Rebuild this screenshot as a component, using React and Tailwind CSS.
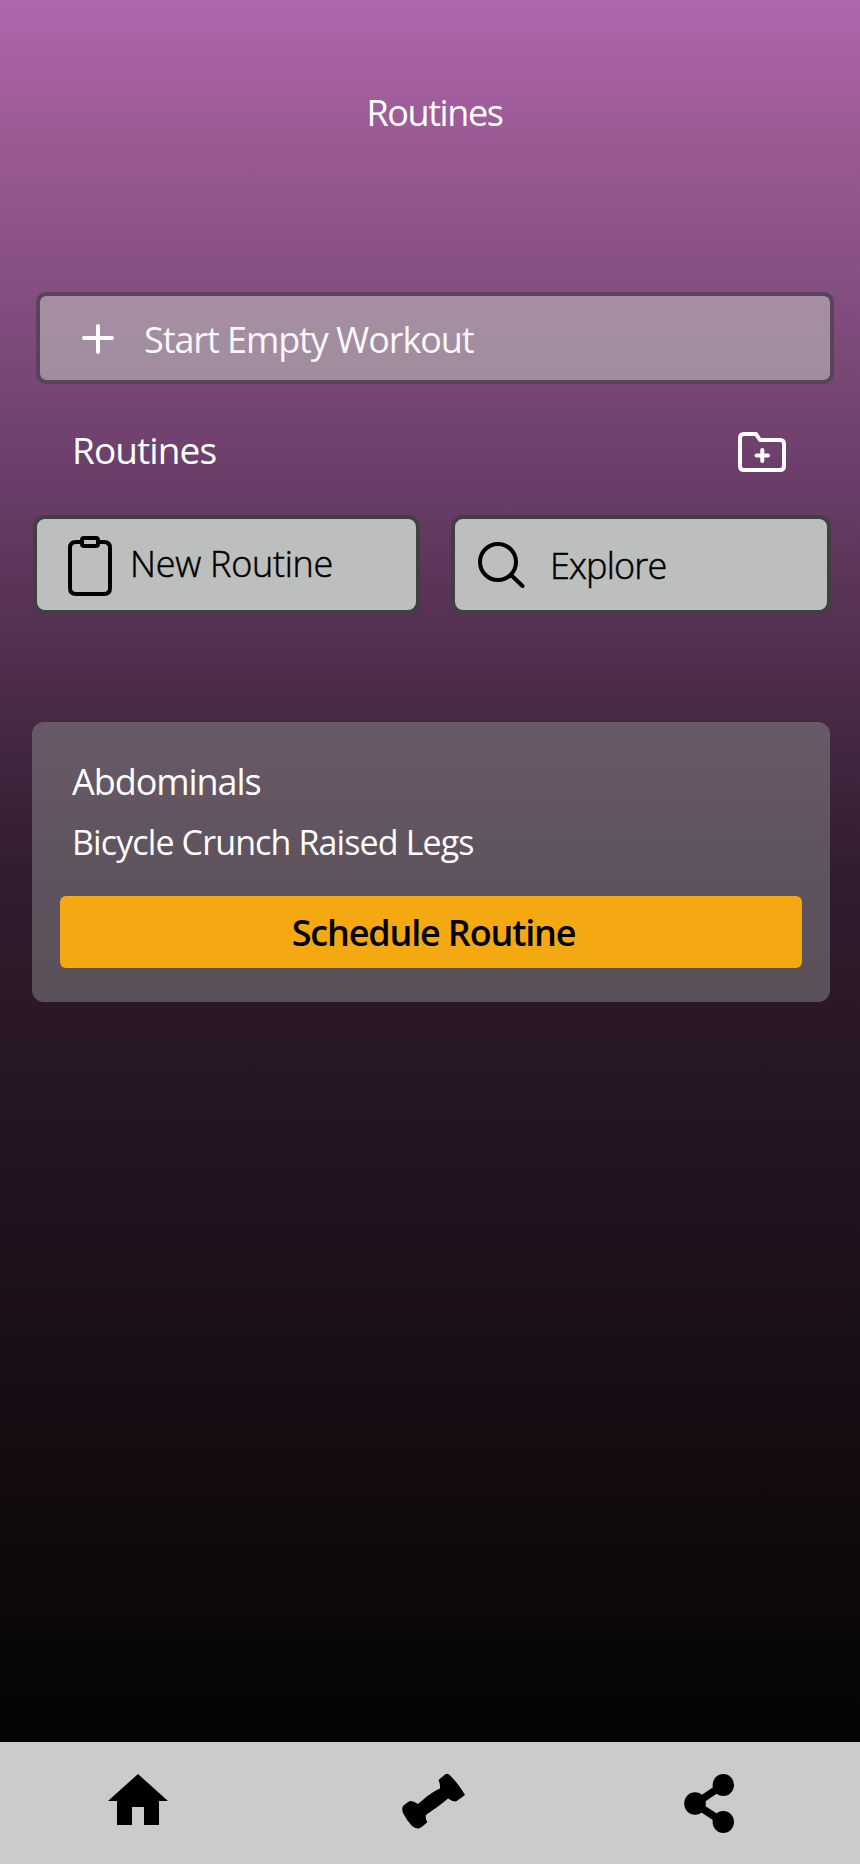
const HomeIcon = () => (
  <svg className="h-[51px] w-[60px]" viewBox="0 0 60 51" fill="black">
    <path d="M30 0 60 27H51V51H36V33H24V51H9V27H0Z" />
  </svg>
)

const DumbbellIcon = () => (
  <svg className="h-[56px] w-[63px]" viewBox="0 0 63 56" fill="black">
    <path d="M36.500 7 43 1.500Q45 0 47 1.500C53 7 59 15 63 22L54 28.500Q50 28.500 46 25.500C40 31 31 37 24 42Q23 46 25.500 49Q20 54 17 55.500Q14 56 10 53Q5 48 1 40Q-.5 36 1 33Q4 30 8 28Q12 28 16 31C23 25 31 18 38 15.500Q38.500 11 36.500 7Z" />
  </svg>
)

const ShareIcon = () => (
  <svg className="h-[60px] w-[50px]" viewBox="0 0 50 60" fill="black">
    <path d="M39 11 11 30 39 48" fill="none" stroke="black" strokeWidth="7.500" />
    <ellipse cx="39.300" cy="11" rx="10.700" ry="11" />
    <ellipse cx="11" cy="29.500" rx="10.800" ry="11.300" />
    <ellipse cx="39.300" cy="48" rx="10.700" ry="11" />
  </svg>
)

const App = () => {
  return (
    <div className="flex h-[1864px] w-[860px] flex-col bg-[linear-gradient(180deg,#ae66ad_0px,#9a5993_150px,#864f82_280px,#693d67_490px,#482a45_710px,#301c2f_880px,#2a1828_1020px,#211320_1190px,#180d14_1400px,#0c080b_1600px,#040304_1742px)] font-['Open_Sans','Noto_Sans',sans-serif] text-white">
      <header className="flex h-[292px] justify-center pt-[89px] pl-[9px]">
        <h1 className="text-[36px] leading-[48px] font-normal tracking-[-1.4px]">Routines</h1>
      </header>

      <main className="flex-1">
        <button className="ml-9 flex h-[92px] w-[798px] items-center rounded-[10px] border-4 border-[#58445a] bg-[#bdbabb]/60 bg-clip-padding pl-[42px]">
          <svg className="mt-[2px] h-[30px] w-8" viewBox="0 0 32 30" fill="none" stroke="white" strokeWidth="4" strokeLinecap="round">
            <path d="M2 14H30M16 2V28" />
          </svg>
          <span className="mt-1 ml-[30px] text-[36px] leading-[48px] tracking-[-1.08px] text-[#f8f8f8]">Start Empty Workout</span>
        </button>

        <div className="flex h-[132px] items-start justify-between pt-[42px] pr-[74px] pl-[72px]">
          <h2 className="text-[37px] leading-[48px] tracking-[-0.9px]">Routines</h2>
          <svg className="mt-[6px] h-[40px] w-12" viewBox="0 0 48 40" fill="none" stroke="white" strokeWidth="4" strokeLinecap="round" strokeLinejoin="round">
            <path d="M2 6Q2 2 6 2H18L22 8H42Q46 8 46 12V34Q46 38 42 38H6Q2 38 2 34Z" />
            <path d="M18.500 23.500H30M24.300 18V29" />
          </svg>
        </div>

        <div className="-mt-px flex pl-[33px]">
          <button className="flex h-[99px] w-[387px] items-start rounded-[12px] border-4 border-[#3f403f] bg-[#bdbfbe] pl-[31px] text-black">
            <svg className="mt-[17px] h-[60px] w-11" viewBox="0 0 44 60" fill="none" stroke="black" strokeWidth="4">
              <path d="M14 6H8Q2 6 2 12V52Q2 58 8 58H36Q42 58 42 52V12Q42 6 36 6H30" />
              <rect x="14" y="2" width="16" height="8" rx="2" />
            </svg>
            <span className="mt-[21px] ml-[18px] text-[36px] leading-[48px] font-light tracking-[-0.27px] [-webkit-text-stroke:0.5px_black]">New Routine</span>
          </button>
          <button className="ml-[31px] flex h-[99px] w-[380px] items-start rounded-[12px] border-4 border-[#3f403f] bg-[#bdbfbe] pl-[23px] text-black">
            <svg className="mt-[23px] h-[46px] w-[47px]" viewBox="0 0 47 46" fill="none" stroke="black" strokeWidth="4" strokeLinecap="round">
              <circle cx="20" cy="20" r="18" />
              <path d="M33 33 44.500 44" />
            </svg>
            <span className="mt-[23px] ml-[25px] text-[36px] leading-[48px] font-light tracking-[-0.85px] [-webkit-text-stroke:0.5px_black]">Explore</span>
          </button>
        </div>

        <section className="mt-[108px] ml-8 h-[280px] w-[798px] rounded-[12px] bg-[#8b8a8b]/50 px-7 pt-[36px]">
          <h3 className="pl-3 text-[36px] leading-[48px] tracking-[-1.05px]">Abdominals</h3>
          <p className="mt-3 pl-3 text-[34px] leading-[48px] tracking-[-0.88px]">Bicycle Crunch Raised Legs</p>
          <button className="mt-[30px] flex h-[72px] w-[742px] items-center justify-center rounded-md bg-[#f4a912] pt-[2px] pl-[5px] text-[36px] leading-[48px] font-semibold tracking-[-1.17px] text-black">
            Schedule Routine
          </button>
        </section>
      </main>

      <nav className="flex h-[122px] items-start bg-[#cbcbcb] pt-8">
        <div className="ml-[108px]">
          <HomeIcon />
        </div>
        <div className="-mt-px ml-[234px]">
          <DumbbellIcon />
        </div>
        <div className="ml-[219px]">
          <ShareIcon />
        </div>
      </nav>
    </div>
  )
}

export default App
